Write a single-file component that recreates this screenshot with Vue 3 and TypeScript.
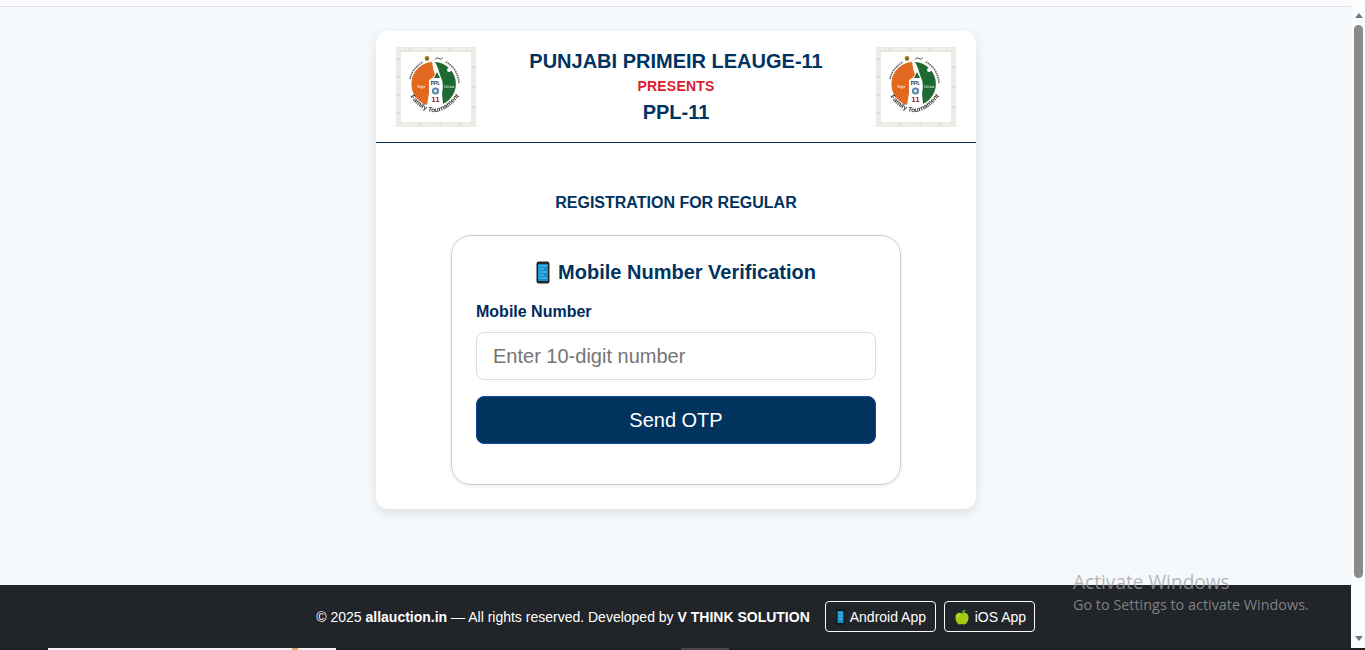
<script setup lang="ts">
const logos = ['left', 'right']
</script>

<template>
  <div class="page">
    <div class="content">
      <div class="topline"></div>
      <main class="main">
        <section class="card">
          <header class="card-head">
            <svg v-for="logo in logos" :key="logo" class="logo" :class="logo" viewBox="0 0 80 80">
              <rect width="80" height="80" fill="#ebe9e3" />
              <rect x="2" y="2" width="76" height="76" fill="none" stroke="#f4f3ef" stroke-width="1" />
              <path d="M1 12h3M1 30h3M1 48h3M1 66h3M76 20h3M76 40h3M76 60h3M14 1v3M34 1v3M54 1v3M24 76v3M44 76v3M64 76v3" stroke="#d5d2ca" stroke-width="1" />
              <rect x="5" y="5" width="70" height="70" fill="#fff" />
              <path d="M36 15 A22 22 0 0 0 31 58 L33 46 L33 33 C36 31 38 30 39 27 C37 24 37 19 36 15 Z" fill="#e2671f" />
              <path d="M39 15 A22 22 0 0 1 47 57 L46 46 C47 42 47 36 46 33 C44 29 43 22 39 15 Z" fill="#1f6a33" />
              <circle cx="53" cy="23" r="2" fill="#fff" />
              <path d="M41 25 L44 31 L38 31 Z" fill="#1f6a33" />
              <text x="39.5" y="37.5" class="logo-ppl">PPL</text>
              <circle cx="39.5" cy="44" r="3.6" fill="#5d86a8" />
              <circle cx="39.5" cy="44" r="1.4" fill="#fff" />
              <text x="39.5" y="55" class="logo-num">11</text>
              <text x="25" y="41" class="logo-tiny">Night</text>
              <text x="53" y="41" class="logo-tiny">Cricket</text>
              <circle cx="31" cy="11.5" r="2.4" fill="#b9772a" />
              <circle cx="31" cy="11.5" r="1" fill="#2f6b3a" />
              <path d="M39 12.5q2-3 4-1t4-1" fill="none" stroke="#555" stroke-width="1" />
              <path d="M14 32 A25 25 0 0 1 27 15" fill="none" stroke="#555" stroke-width="1.6" stroke-dasharray="1.4 0.8" />
              <path d="M50 15 A25 25 0 0 1 63 36" fill="none" stroke="#555" stroke-width="1.6" stroke-dasharray="1.4 0.8" />
              <path :id="'arc-' + logo" d="M13 48 Q39 84 67 44" fill="none" />
              <text class="logo-family"><textPath :href="'#arc-' + logo" startOffset="2">Family Tournament</textPath></text>
            </svg>
            <div class="titles">
              <h1>PUNJABI PRIMEIR LEAUGE-11</h1>
              <p class="presents">PRESENTS</p>
              <h2>PPL-11</h2>
            </div>
          </header>

          <div class="card-body">
            <h3 class="reg-title">REGISTRATION FOR REGULAR</h3>
            <form class="verify" @submit.prevent>
              <h4>
                <svg class="phone" viewBox="0 0 14 23">
                  <rect x="0.5" y="0.5" width="13" height="22" rx="2.2" fill="#20262b" />
                  <rect x="2" y="3" width="10" height="17" fill="#0f8fce" />
                  <path d="M3 5h8M3 8h5M3 11h8M3 14h5M3 17h8" stroke="#6cc6ea" stroke-width="1.2" />
                </svg>
                Mobile Number Verification
              </h4>
              <label for="mobile">Mobile Number</label>
              <input id="mobile" type="text" placeholder="Enter 10-digit number" />
              <button type="submit">Send OTP</button>
            </form>
          </div>
        </section>
      </main>

      <footer class="footer">
        <div class="footer-row">
          <span>© 2025 <b>allauction.in</b> — All rights reserved. Developed by <b>V THINK SOLUTION</b></span>
          <a class="app-btn android">
            <svg class="app-phone" viewBox="0 0 9 16">
              <rect width="9" height="16" rx="1.5" fill="#11181d" />
              <rect x="1.5" y="2" width="6" height="12" fill="#0f8fce" />
              <path d="M2.5 4h4M2.5 7h4M2.5 10h4" stroke="#6cc6ea" stroke-width="1" />
            </svg>
            Android App
          </a>
          <a class="app-btn ios">
            <svg class="app-apple" viewBox="0 0 14 16">
              <path d="M7 4.5C5 3 .5 3.5 .5 8.5C.5 12.5 3 15.5 4.8 15.5C5.8 15.5 6.2 15 7 15C7.8 15 8.2 15.5 9.2 15.5C11 15.5 13.5 12.5 13.5 8.5C13.5 3.5 9 3 7 4.5Z" fill="#a4c814" />
              <path d="M6.8 4.5C6.5 2.5 8 .8 10.5 .8C10.6 3 9 4.5 6.8 4.5Z" fill="#4f9a1a" />
              <path d="M2.5 8C2.5 6.5 3.5 5.8 4.5 5.6" fill="none" stroke="#d4ec6a" stroke-width="1" />
            </svg>
            iOS App
          </a>
        </div>
        <div class="peek">
          <div class="peek-img"><i></i></div>
          <div class="peek-box"></div>
        </div>
      </footer>
    </div>

    <aside class="scrollbar">
      <i class="arrow up"></i>
      <div class="track"><div class="thumb"></div></div>
      <i class="arrow down"></i>
    </aside>

    <div class="activate">
      <div class="a1">Activate Windows</div>
      <div class="a2">Go to Settings to activate Windows.</div>
    </div>
  </div>
</template>

<style>
html, body { margin: 0; height: 650px; overflow: hidden; }
</style>

<style scoped>
* { box-sizing: border-box; }

.page {
  position: relative;
  display: flex;
  height: 650px;
  overflow: hidden;
  font-family: "Liberation Sans", Arial, sans-serif;
  background: #f5f9fc;
}
.content {
  flex: 1;
  min-width: 0;
  display: flex;
  flex-direction: column;
}
.topline {
  height: 7px;
  flex: none;
  background: #fbfcfd;
  border-bottom: 1px solid #dfe3e7;
}
.main {
  flex: 1;
  display: flex;
  justify-content: center;
  padding: 24px 0 0 1px;
}
.card {
  width: 600px;
  height: 478px;
  background: #fff;
  border-radius: 12px;
  box-shadow: 0 4px 12px rgba(0, 0, 0, 0.1);
}
.card-head {
  display: flex;
  align-items: center;
  justify-content: space-between;
  height: 112px;
  padding: 0 20px;
  border-bottom: 1px solid #00335f;
}
.logo { width: 80px; height: 80px; flex: none; filter: blur(0.35px); }
.logo.right { order: 3; }
.logo-ppl { font: bold 5px "Liberation Sans", sans-serif; fill: #123a72; text-anchor: middle; }
.logo-num { font: bold 8px "Liberation Sans", sans-serif; fill: #9c1c1c; text-anchor: middle; }
.logo-tiny { font: 3.6px "Liberation Serif", serif; fill: #fff; text-anchor: middle; }
.logo-family { font: bold 6.6px "Liberation Sans", sans-serif; fill: #333; }
.titles { order: 2; text-align: center; color: #00335f; }
.titles h1 { margin: 0; font-size: 20px; line-height: 24px; font-weight: 700; }
.presents { margin: 5px 0 6px; font-size: 14px; line-height: 16px; font-weight: 700; color: #dc1c2c; letter-spacing: 0.2px; }
.titles h2 { margin: 0; font-size: 20px; line-height: 24px; font-weight: 700; }
.card-body {
  padding: 50px 75px 0;
}
.reg-title {
  margin: 0 0 23px;
  font-size: 16px;
  line-height: 19px;
  font-weight: 700;
  text-align: center;
  color: #00335f;
}
.verify {
  display: flex;
  flex-direction: column;
  height: 250px;
  padding: 24px;
  background: #fff;
  border: 1px solid #ccc;
  border-radius: 20px;
  box-shadow: 0 1px 4px rgba(0, 0, 0, 0.08);
}
.verify h4 {
  display: flex;
  align-items: center;
  justify-content: center;
  gap: 8px;
  margin: 0 0 18px;
  font-size: 20px;
  line-height: 24px;
  font-weight: 700;
  color: #00335f;
}
.phone { width: 14px; height: 23px; }
.verify label {
  font-size: 16px;
  line-height: 19px;
  font-weight: 700;
  color: #002a5c;
  margin-bottom: 11px;
}
.verify input {
  height: 48px;
  padding: 0 16px;
  border: 1px solid #ddd;
  border-radius: 8px;
  font: 20px "Liberation Sans", Arial, sans-serif;
  background: #fff;
}
.verify input::placeholder { color: #757575; opacity: 1; }
.verify button {
  height: 48px;
  margin-top: 16px;
  border: 1px solid #0d4ea6;
  border-radius: 8px;
  background: #02335f;
  color: #fff;
  font: 20px "Liberation Sans", Arial, sans-serif;
}
.footer {
  flex: none;
  height: 65px;
  background: #212529;
  color: #fff;
  display: flex;
  flex-direction: column;
}
.footer-row {
  flex: 1;
  display: flex;
  align-items: center;
  justify-content: center;
  gap: 8px;
  font-size: 14px;
}
.footer-row > span { margin-right: 7px; }
.app-btn {
  display: inline-flex;
  align-items: center;
  height: 31px;
  border: 1px solid #f8f9fa;
  border-radius: 4px;
  font-size: 14px;
  color: #fff;
}
.app-btn.android { width: 111px; padding-left: 10px; gap: 5px; }
.app-btn.ios { width: 91px; padding-left: 10px; gap: 6px; }
.app-phone { width: 9px; height: 16px; }
.app-apple { width: 14px; height: 16px; }
.peek {
  height: 2px;
  display: flex;
  padding-left: 48px;
  background: #1c2023;
}
.peek-img {
  width: 288px;
  background: #f2f2f2;
  position: relative;
}
.peek-img i {
  position: absolute;
  left: 244px;
  width: 6px;
  height: 2px;
  background: #d9a860;
}
.peek-box {
  width: 48px;
  margin-left: 345px;
  background: #4a4a4a;
}
.scrollbar {
  width: 14px;
  flex: none;
  display: flex;
  flex-direction: column;
  align-items: center;
  padding-left: 1px;
  background: #fbfcfd;
  border-bottom: 2px solid #1c2023;
}
.arrow {
  flex: none;
  width: 0;
  height: 0;
  border-left: 4.5px solid transparent;
  border-right: 4.5px solid transparent;
}
.arrow.up { margin-top: 13px; border-bottom: 5px solid #777; }
.arrow.down { margin-bottom: 7px; border-top: 5px solid #777; }
.track { flex: 1; width: 100%; display: flex; justify-content: center; padding-top: 7px; }
.thumb { width: 9px; height: 553px; background: #8a8a8a; border-radius: 4.5px; }
.activate {
  position: absolute;
  left: 1073px;
  top: 570px;
  font-family: "Open Sans", sans-serif;
  color: rgba(160, 160, 160, 0.75);
  pointer-events: none;
}
.a1 { font-size: 19.1px; line-height: 24px; }
.a2 { font-size: 14.4px; line-height: 22px; }
</style>
